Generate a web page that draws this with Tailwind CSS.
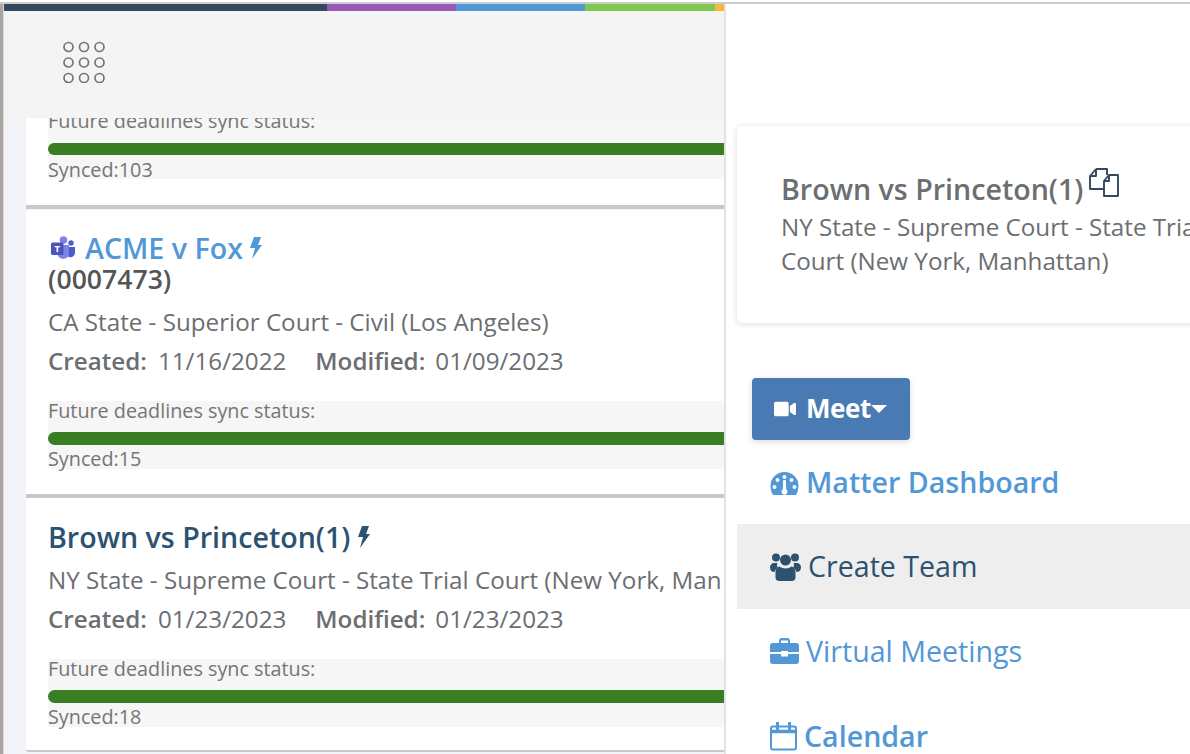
<!DOCTYPE html>
<html lang="en">
<head>
    <meta charset="UTF-8">
    <title>Matter</title>
    <script src="https://cdn.jsdelivr.net/npm/@tailwindcss/browser@4"></script>
</head>
<body class="bg-white font-['Open_Sans',sans-serif] overflow-hidden">
<div class="w-[1190px] h-[754px] overflow-hidden flex flex-col">
    <div class="h-[2px] bg-white shrink-0"></div>
    <div class="h-[2px] bg-[#cccccc] shrink-0"></div>
    <div class="flex flex-1 min-h-0">
        <!-- left list -->
        <div class="w-[726px] shrink-0 flex border-r-2 border-[#e2e2e2] bg-[#f3f4f8] overflow-hidden">
            <div class="w-[4px] shrink-0 bg-[#aba5a2] border-r border-[#d8d8d8]"></div>
            <div class="flex-1 min-w-0 flex flex-col">
                <div class="flex h-[7px] shrink-0">
                    <div class="w-[323px] bg-[#34495e]"></div>
                    <div class="w-[129px] bg-[#9b59b6]"></div>
                    <div class="w-[129px] bg-[#5297d6]"></div>
                    <div class="w-[130px] bg-[#7fc94f]"></div>
                    <div class="flex-1 bg-[#f5b642]"></div>
                </div>
                <div class="h-[107px] shrink-0 bg-[#f4f4f4] flex items-center pl-[58px] pb-[6px]">
                    <svg width="44" height="42" viewBox="0 0 44 42" fill="none" stroke="#757575" stroke-width="1.700">
                        <circle cx="6.500" cy="6" r="4.500"/><circle cx="22" cy="6" r="4.500"/><circle cx="37.500" cy="6" r="4.500"/>
                        <circle cx="6.500" cy="21.500" r="4.500"/><circle cx="22" cy="21.500" r="4.500"/><circle cx="37.500" cy="21.500" r="4.500"/>
                        <circle cx="6.500" cy="37" r="4.500"/><circle cx="22" cy="37" r="4.500"/><circle cx="37.500" cy="37" r="4.500"/>
                    </svg>
                </div>
                <div class="pl-[22px] flex flex-col">
                    <!-- clipped first card -->
                    <div class="h-[91px] shrink-0 bg-white border-b-4 border-[#c9c9c9] pl-[22px] overflow-hidden flex flex-col justify-end pb-[26px]">
                        <div class="bg-[#f6f6f6] h-[68px] shrink-0 text-[#757575] text-[19.800px] leading-[20px]">
                            <div class="h-[32px] whitespace-nowrap">Future deadlines sync status:</div>
                            <div class="h-[12px] bg-[#3a7d22] rounded-l-full"></div>
                            <div class="h-[24px] pt-[5px]">Synced:103</div>
                        </div>
                    </div>
                    <div class="h-px shrink-0 bg-[#f3f4f8]"></div>
                    <!-- ACME -->
                    <div class="h-[288px] shrink-0 bg-white border-b-4 border-[#c9c9c9] pl-[22px] pt-[20px] rounded-tl-[3px]">
                        <div class="flex items-center h-[36px] text-[28.600px] font-semibold text-[#5297d6] leading-[36px]">
                            <svg class="ml-[3px] mr-[10px] shrink-0" width="24" height="24" viewBox="0 0 24 24">
                                <circle cx="20" cy="7" r="2.700" fill="#5059c9"/>
                                <path d="M15 11h9v6a4.500 4.500 0 0 1-7 3.500z" fill="#5059c9"/>
                                <circle cx="12.500" cy="4" r="3.800" fill="#7b83eb"/>
                                <path d="M7 9h11v9a6 6 0 0 1-11 2z" fill="#7b83eb"/>
                                <rect x="0" y="6.500" width="12.500" height="12.500" rx="1.500" fill="#4b53bc"/>
                                <text x="6.250" y="16.200" text-anchor="middle" font-size="9.500" font-weight="700" fill="#ffffff" font-family="Open Sans">T</text>
                            </svg>
                            <span>ACME v Fox</span>
                            <svg class="ml-[6px]" width="13" height="24" viewBox="0 0 13 24"><path d="M5 1h7L9 9h4L3 23l3-11H1z" fill="#5297d6"/></svg>
                        </div>
                        <div class="text-[26.600px] font-semibold text-[#555555] leading-[28px] mt-[-1px]">(0007473)</div>
                        <div class="text-[24.200px] text-[#6b6e72] leading-[30px] mt-[14px] whitespace-nowrap">CA State - Superior Court - Civil (Los Angeles)</div>
                        <div class="flex text-[24.200px] text-[#6b6e72] leading-[30px] mt-[9px] whitespace-nowrap">
                            <span class="font-semibold mr-[11px]">Created:</span><span class="mr-[29px]">11/16/2022</span>
                            <span class="font-semibold mr-[10px]">Modified:</span><span>01/09/2023</span>
                        </div>
                        <div class="bg-[#f6f6f6] h-[68px] mt-[25px] text-[#757575] text-[19.800px] leading-[20px]">
                            <div class="h-[31px] whitespace-nowrap">Future deadlines sync status:</div>
                            <div class="h-[13px] bg-[#3a7d22] rounded-l-full"></div>
                            <div class="h-[24px] pt-[4px]">Synced:15</div>
                        </div>
                    </div>
                    <!-- Brown -->
                    <div class="h-[254px] shrink-0 bg-white pl-[22px] pt-[21px] rounded-l-[3px] border-b-2 border-[#c9c9c9] overflow-hidden">
                        <div class="flex items-center h-[36px] text-[28.600px] font-semibold text-[#2c5270] leading-[36px] whitespace-nowrap">
                            <span>Brown vs Princeton(1)</span>
                            <svg class="ml-[7px]" width="13" height="24" viewBox="0 0 13 24"><path d="M5 1h7L9 9h4L3 23l3-11H1z" fill="#2c5270"/></svg>
                        </div>
                        <div class="w-[674px] overflow-hidden text-[24.200px] text-[#6b6e72] leading-[30px] mt-[10px] whitespace-nowrap">NY State - Supreme Court - State Trial Court (New York, Manhattan)</div>
                        <div class="flex text-[24.200px] text-[#6b6e72] leading-[30px] mt-[9px] whitespace-nowrap">
                            <span class="font-semibold mr-[11px]">Created:</span><span class="mr-[29px]">01/23/2023</span>
                            <span class="font-semibold mr-[10px]">Modified:</span><span>01/23/2023</span>
                        </div>
                        <div class="bg-[#f6f6f6] h-[68px] mt-[25px] text-[#757575] text-[19.800px] leading-[20px]">
                            <div class="h-[31px] whitespace-nowrap">Future deadlines sync status:</div>
                            <div class="h-[13px] bg-[#3a7d22] rounded-l-full"></div>
                            <div class="h-[24px] pt-[4px]">Synced:18</div>
                        </div>
                    </div>
                </div>
            </div>
        </div>
        <!-- right panel -->
        <div class="flex-1 min-w-0 pl-[11px] pt-[122px] overflow-hidden">
            <div class="h-[197px] w-[500px] bg-white rounded-[5px] shadow-[0_1px_6px_rgba(0,0,0,0.14)] pl-[44px] pt-[44px]">
                <div class="flex items-start h-[40px] whitespace-nowrap text-[28.600px] font-semibold text-[#6b6e72] leading-[38px]">
                    <span>Brown vs Princeton(1)</span>
                    <svg class="ml-[6px] mt-[-2px]" width="30" height="29" viewBox="-1 -1 30 29" fill="none" stroke="#34495e" stroke-width="1.900" stroke-linejoin="round">
                        <path d="M6 0H17V6"/><path d="M6 0L0 7V20H14"/><path d="M0 7H6V0"/>
                        <path d="M19 6H28V27H14V12z"/><path d="M14 12H19V6"/>
                    </svg>
                </div>
                <div class="text-[24.200px] text-[#6b6e72] leading-[34px] w-[440px]">NY State - Supreme Court - State Trial Court (New York, Manhattan)</div>
            </div>
            <div class="mt-[55px] ml-[15px] w-[158px] h-[62px] rounded-[4px] bg-[#4a7ab3] shadow-[0_2px_6px_rgba(0,0,0,0.15)] flex items-center pl-[22px] pb-[2px] text-white text-[26px] font-bold">
                <svg class="mr-[10px] mt-[2px]" width="22" height="20" viewBox="0 0 576 512"><path fill="#ffffff" d="M336.200 64H47.800C21.400 64 0 85.400 0 111.800v288.400C0 426.600 21.400 448 47.800 448h288.400c26.400 0 47.800-21.400 47.800-47.800V111.800c0-26.400-21.400-47.800-47.800-47.800zm189.400 37.700L416 177.300v157.400l109.600 75.500c21.200 14.600 50.400-.3 50.400-25.800V127.500c0-25.400-29.100-40.400-50.400-25.800z"/></svg>
                <span class="tracking-[-0.4px]">Meet</span>
                <span class="w-0 h-0 mt-[2px] border-x-[8px] border-x-transparent border-t-[8px] border-t-white"></span>
            </div>
            <div class="h-[84px] flex items-center pl-[33px] text-[28.600px] font-semibold text-[#5297d6] whitespace-nowrap">
                <svg class="mr-[7px] mt-[3px]" width="29" height="25" viewBox="0 0 29 25">
                    <path fill="#5297d6" fill-rule="evenodd" d="M14.500 1A14 14 0 0 0 .5 15c0 3 1 6.500 2.500 9h23c1.500-2.500 2.500-6 2.500-9a14 14 0 0 0-14-14zM14.500 4a2 2 0 1 1 0 4 2 2 0 0 1 0-4zM7.500 7a2 2 0 1 1 0 4 2 2 0 0 1 0-4zM21.500 7a2 2 0 1 1 0 4 2 2 0 0 1 0-4zM4.500 14a2 2 0 1 1 0 4 2 2 0 0 1 0-4zM24.500 14a2 2 0 1 1 0 4 2 2 0 0 1 0-4zM13.200 9h2.600l.4 9.200a3 3 0 1 1-3.400 0z"/>
                </svg>
                <span>Matter Dashboard</span>
            </div>
            <div class="h-[85px] w-[453px] bg-[#eeeeee] flex items-center pl-[33px] text-[28.600px] text-[#2c5270] whitespace-nowrap">
                <svg class="mr-[7px] mt-[-1px]" width="31" height="29" viewBox="0 0 31 29">
                    <g fill="#2c5270">
                        <circle cx="6" cy="5.500" r="4"/><circle cx="25" cy="5.500" r="4"/><circle cx="15.500" cy="8" r="5.500"/>
                        <path d="M0 15.500c0-3 2-4.500 4-4.500h3.500c-.8 1.500-.5 3.500.5 5-2 1-3 2.500-3.500 4C2 20 0 18.500 0 15.500z"/>
                        <path d="M31 15.500c0-3-2-4.500-4-4.500h-3.500c.8 1.500.5 3.500-.5 5 2 1 3 2.500 3.500 4 2.500 0 4.500-1.500 4.500-4.500z"/>
                        <path d="M9.500 14.500c3 2.500 9 2.500 12 0 2.500.8 4 3 4 6v5c0 2-1.500 3.500-3.500 3.500H9c-2 0-3.500-1.500-3.500-3.500v-5c0-3 1.500-5.200 4-6z"/>
                    </g>
                </svg>
                <span>Create Team</span>
            </div>
            <div class="h-[85px] flex items-center pl-[33px] text-[28.600px] text-[#5297d6] whitespace-nowrap">
                <svg class="mr-[7px] mt-[-1px]" width="29" height="26" viewBox="0 0 29 26">
                    <path fill="#5297d6" fill-rule="evenodd" d="M9 5V3a3 3 0 0 1 3-3h5a3 3 0 0 1 3 3v2h6a3 3 0 0 1 3 3v6H18v-1h-7v1H0V8a3 3 0 0 1 3-3zM11 2.500V5h7V2.500zM0 16h11v2.500h7V16h11v7a3 3 0 0 1-3 3H3a3 3 0 0 1-3-3z"/>
                </svg>
                <span>Virtual Meetings</span>
            </div>
            <div class="h-[85px] flex items-center pl-[33px] text-[28.600px] font-semibold text-[#5297d6] whitespace-nowrap">
                <svg class="mr-[7px] mt-[-1px]" width="27" height="29" viewBox="0 0 27 29" fill="none" stroke="#5297d6" stroke-width="2">
                    <rect x="1" y="4.500" width="25" height="23" rx="2"/>
                    <path d="M1 9.500h25" stroke-width="3.500"/>
                    <path d="M7.500 1v6M19.500 1v6" stroke-width="3" stroke-linecap="round"/>
                </svg>
                <span>Calendar</span>
            </div>
        </div>
    </div>
</div>
</body>
</html>
